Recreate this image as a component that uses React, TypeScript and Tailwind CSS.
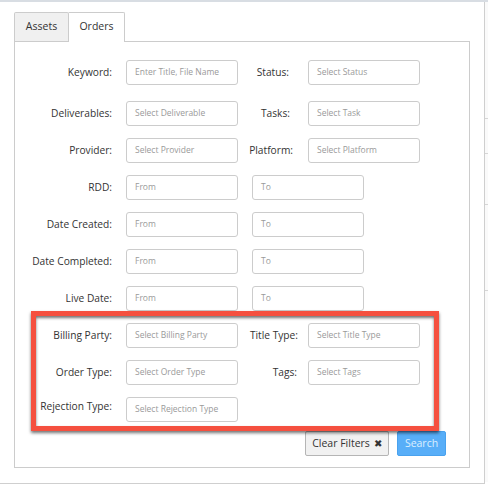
import React from "react";

const font = { fontFamily: '"Open Sans", "Noto Sans", Arial, sans-serif' };

function Field({ placeholder, w = "w-[112px]" }: { placeholder: string; w?: string }) {
  return (
    <div
      className={`${w} h-[25px] shrink-0 rounded-[3px] border border-[#cccccc] bg-white pl-[8px] flex items-center text-[8.5px] text-[#9a9a9a]`}
    >
      {placeholder}
    </div>
  );
}

function Label({ text, className = "" }: { text: string; className?: string }) {
  return (
    <div className={`text-[10.2px] text-[#333] whitespace-nowrap text-right ${className}`}>{text}</div>
  );
}

type Row =
  | { kind: "pair"; l1: string; p1: string; l2: string; p2: string; pr2: string }
  | { kind: "range"; l1: string }
  | { kind: "single"; l1: string; p1: string };

const rows: Row[] = [
  { kind: "pair", l1: "Keyword:", p1: "Enter Title, File Name", l2: "Status:", p2: "Select Status", pr2: "pr-[9px]" },
  { kind: "pair", l1: "Deliverables:", p1: "Select Deliverable", l2: "Tasks:", p2: "Select Task", pr2: "pr-[8px]" },
  { kind: "pair", l1: "Provider:", p1: "Select Provider", l2: "Platform:", p2: "Select Platform", pr2: "pr-[5px]" },
  { kind: "range", l1: "RDD:" },
  { kind: "range", l1: "Date Created:" },
  { kind: "range", l1: "Date Completed:" },
  { kind: "range", l1: "Live Date:" },
  { kind: "pair", l1: "Billing Party:", p1: "Select Billing Party", l2: "Title Type:", p2: "Select Title Type", pr2: "pr-[0px]" },
  { kind: "pair", l1: "Order Type:", p1: "Select Order Type", l2: "Tags:", p2: "Select Tags", pr2: "pr-[1px]" },
  { kind: "single", l1: "Rejection Type:", p1: "Select Rejection Type" },
];

function FormRow({ row }: { row: Row }) {
  return (
    <div className="flex items-center h-[25px]">
      <Label text={row.l1} className={`w-[97px] ${row.kind === "single" ? "pb-[6px]" : ""}`} />
      <div className="w-[14px]" />
      {row.kind === "range" ? (
        <>
          <Field placeholder="From" />
          <div className="w-[14px]" />
          <Field placeholder="To" />
        </>
      ) : (
        <Field placeholder={row.p1} />
      )}
      {row.kind === "pair" && (
        <>
          <Label text={row.l2} className={`w-[60px] ${row.pr2}`} />
          <div className="w-[10px]" />
          <Field placeholder={row.p2} />
        </>
      )}
    </div>
  );
}

export default function App() {
  return (
    <div className="relative w-[488px] h-[486px] overflow-hidden bg-white" style={font}>
      {/* backdrop behind the dialog */}
      <div className="absolute inset-x-0 top-0 h-[2px] bg-[#d8dde3]" />
      <div className="absolute right-0 top-[2px] w-[3px] h-[480px] flex flex-col bg-[#fafafa]">
        <div className="h-[116px]" />
        <div className="h-px bg-[#d6d6d6]" />
        <div className="h-[34px]" />
        <div className="h-px bg-[#d6d6d6]" />
        <div className="h-[50px]" />
        <div className="h-px bg-[#d6d6d6]" />
        <div className="h-[85px]" />
        <div className="h-px bg-[#d6d6d6]" />
      </div>

      {/* dialog */}
      <div className="mt-[2px] w-[485px] h-[482px] bg-white border-r border-b border-[#cfcfcf] pt-[10px] pl-[14px]">
        {/* tabs */}
        <div className="flex h-[29px] items-end">
          <div className="h-[29px] w-[55px] bg-[#f0f0f0] border border-b-0 border-[#cccccc] rounded-t-[2px] flex items-center justify-center text-[10.5px] text-[#333]">
            Assets
          </div>
          <div className="relative z-10 h-[30px] w-[56px] -mb-px bg-white border border-l-0 border-b-0 border-[#cccccc] rounded-tr-[2px] flex items-center justify-center text-[10.5px] text-[#333] pb-[1px]">
            Orders
          </div>
        </div>

        {/* tab body */}
        <div className="relative w-[456px] h-[427px] border border-[#cccccc] pt-[18px]">
          <div className="flex flex-col">
            <FormRow row={rows[0]} />
            <div className="flex flex-col gap-[12px] mt-[16px]">
              {rows.slice(1).map((r) => (
                <FormRow key={r.l1} row={r} />
              ))}
            </div>
          </div>

          <div className="flex justify-end gap-[8px] mt-[9px] pr-[23px]">
            <button className="h-[25px] w-[84px] rounded-[2px] border border-[#b5b5b5] bg-[#f1f1f1] text-[10.5px] text-[#333] flex items-center justify-center gap-[4px]">
              Clear Filters <span className="text-[10px]">✖</span>
            </button>
            <button className="h-[25px] w-[49px] rounded-[2px] bg-[#58aef8] border border-[#4aa2ee] text-[10.5px] text-[#dcefff] flex items-center justify-center">
              Search
            </button>
          </div>

          {/* highlight frame around the added filters */}
          <div className="pointer-events-none absolute left-[16px] top-[269px] w-[408px] h-[120px] border-[5px] border-[#f5503f] shadow-[0_2px_3px_rgba(0,0,0,0.55),inset_0_2px_3px_rgba(0,0,0,0.55)]" />
        </div>
      </div>
    </div>
  );
}
